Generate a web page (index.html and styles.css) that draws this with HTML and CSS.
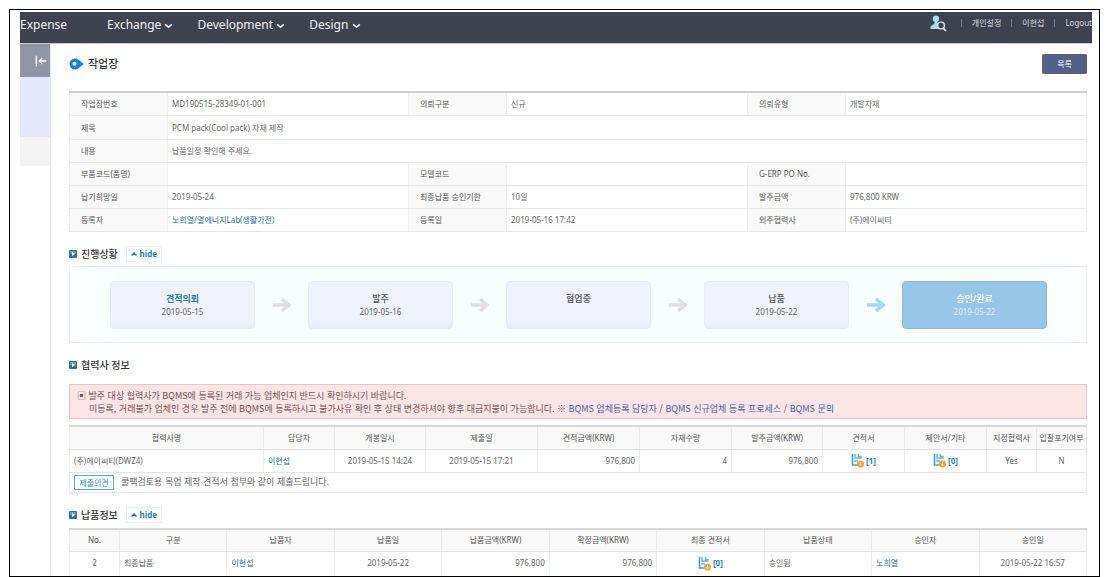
FILE: index.html
```html
<!DOCTYPE html>
<html lang="ko">
<head>
<meta charset="utf-8">
<title>작업장</title>
<link rel="stylesheet" href="styles.css">
</head>
<body>
<svg class="defs" aria-hidden="true">
  <symbol id="arrow" viewBox="0 0 20 16"><path d="M1 8h15M10 2l7 6-7 6" fill="none" stroke="currentColor" stroke-width="3.6"/></symbol>
  <symbol id="bullet" viewBox="0 0 8 8"><rect width="8" height="8" rx="1" fill="#2f6ea8"/><rect x="1" y="1" width="6" height="3" fill="#5b9bd0"/><path d="M3 2l3 2-3 2z" fill="#fff"/></symbol>
  <symbol id="doc" viewBox="0 0 14 15"><path d="M1.500 1v11.500M1 12h5" fill="none" stroke="#3f9bdc" stroke-width="1.600"/><path d="M4 1v4h6V3.500H7.500V1" fill="none" stroke="#6ab6e8" stroke-width="1.500"/><path d="M3 8h4" stroke="#6ab6e8" stroke-width="1.500"/><circle cx="9.500" cy="11" r="3.500" fill="#f2a33a"/><path d="M9.500 9v3.500M8.200 11.300l1.300 1.300 1.300-1.300" fill="none" stroke="#fbe3bd" stroke-width="0.900"/></symbol>
  <symbol id="up" viewBox="0 0 6 4"><path d="M0.500 3.500L3 1l2.500 2.500" fill="none" stroke="currentColor" stroke-width="1.500"/></symbol>
  <symbol id="down" viewBox="0 0 8 5"><path d="M1 1l3 2.500L7 1" fill="none" stroke="currentColor" stroke-width="1.500"/></symbol>
</svg>
<div class="frame">
  <header class="topbar">
    <nav class="menu">
      <a href="#">Expense</a>
      <a href="#">Exchange <svg class="down"><use href="#down"/></svg></a>
      <a href="#">Development <svg class="down"><use href="#down"/></svg></a>
      <a href="#">Design <svg class="down"><use href="#down"/></svg></a>
    </nav>
    <div class="user">
      <svg class="person" viewBox="0 0 17 17"><circle cx="6" cy="3.800" r="3.200" fill="#a5dcec"/><path d="M4.500 6h3v2.500l3 1.200V14H0.500v-2.500L4.500 8.500z" fill="#a5dcec"/><circle cx="11" cy="10.500" r="3.400" fill="#3f434f" stroke="#d5eef5" stroke-width="1.400"/><path d="M13.300 13l2.500 3" stroke="#d5eef5" stroke-width="1.600"/></svg>
      <a href="#">개인설정</a><a href="#">이현섭</a><a href="#">Logout</a>
    </div>
  </header>
  <div class="body">
    <aside class="side">
      <button class="fold" aria-label="메뉴 접기"><svg viewBox="0 0 14 12"><path d="M1.500 0v12M13 6H5.500M8.500 2.500L5 6l3.500 3.500" fill="none" stroke="#fff" stroke-width="1.500"/></svg></button>
      <div class="side-on"></div>
      <div class="side-off"></div>
    </aside>
    <main class="main">
      <div class="title">
        <svg class="mark" viewBox="0 0 15 12"><path d="M6 0.500C9 0.500 10.500 2.500 14.500 6C10.500 9.500 9 11.500 6 11.500A5.500 5.500 0 0 1 6 0.500z" fill="#1583dc"/><circle cx="5.500" cy="5.800" r="2" fill="#fff"/></svg>
        <h1>작업장</h1>
        <button class="list">목록</button>
      </div>

      <table class="info">
        <colgroup><col class="k"><col><col class="k"><col><col class="k"><col></colgroup>
        <tr><th>작업장번호</th><td>MD190515-28349-01-001</td><th>의뢰구분</th><td>신규</td><th>의뢰유형</th><td>개발자재</td></tr>
        <tr><th>제목</th><td colspan="5">PCM pack(Cool pack) 자재 제작</td></tr>
        <tr><th>내용</th><td colspan="5">납품일정 확인해 주세요.</td></tr>
        <tr><th>부품코드(품명)</th><td></td><th>모델코드</th><td></td><th>G-ERP PO No.</th><td></td></tr>
        <tr><th>납기희망일</th><td>2019-05-24</td><th>최종납품 승인기한</th><td>10일</td><th>발주금액</th><td>976,800 KRW</td></tr>
        <tr><th>등록자</th><td><a href="#">노희열/열에너지Lab(생활가전)</a></td><th>등록일</th><td>2019-05-16 17:42</td><th>외주협력사</th><td>(주)에이씨티</td></tr>
      </table>

      <div class="head">
        <svg class="bullet"><use href="#bullet"/></svg><h2>진행상황</h2>
        <button class="hide"><svg class="up"><use href="#up"/></svg>hide</button>
      </div>
      <div class="flow">
        <div class="step first"><b>견적의뢰</b><span>2019-05-15</span></div>
        <svg class="arrow"><use href="#arrow"/></svg>
        <div class="step"><b>발주</b><span>2019-05-16</span></div>
        <svg class="arrow"><use href="#arrow"/></svg>
        <div class="step"><b>협업중</b></div>
        <svg class="arrow"><use href="#arrow"/></svg>
        <div class="step"><b>납품</b><span>2019-05-22</span></div>
        <svg class="arrow now"><use href="#arrow"/></svg>
        <div class="step done"><b>승인/완료</b><span>2019-05-22</span></div>
      </div>

      <div class="head">
        <svg class="bullet"><use href="#bullet"/></svg><h2>협력사 정보</h2>
      </div>
      <div class="warn">
        <p>▣ 발주 대상 협력사가 BQMS에 등록된 거래 가능 업체인지 반드시 확인하시기 바랍니다.</p>
        <p class="more">미등록, 거래불가 업체인 경우 발주 전에 BQMS에 등록하시고 불가사유 확인 후 상태 변경하셔야 향후 대금지불이 가능합니다. ※ <a href="#">BQMS 업체등록 담당자</a> / <a href="#">BQMS 신규업체 등록 프로세스</a> / <a href="#">BQMS 문의</a></p>
      </div>
      <table class="grid vendors">
        <colgroup><col class="w194"><col class="w71"><col class="w91"><col class="w112"><col class="w102"><col class="w92"><col class="w91"><col class="w82"><col class="w82"><col class="w50"><col class="w50"></colgroup>
        <thead><tr><th>협력사명</th><th>담당자</th><th>개봉일시</th><th>제출일</th><th>견적금액(KRW)</th><th>자재수량</th><th>발주금액(KRW)</th><th>견적서</th><th>제안서/기타</th><th>지정협력사</th><th>입찰포기여부</th></tr></thead>
        <tbody>
          <tr><td>(주)에이씨티(DWZ4)</td><td><a href="#">이현섭</a></td><td class="c">2019-05-15 14:24</td><td class="c">2019-05-15 17:21</td><td class="r">976,800</td><td class="r">4</td><td class="r">976,800</td><td class="c"><a class="file" href="#"><svg><use href="#doc"/></svg>[1]</a></td><td class="c"><a class="file" href="#"><svg><use href="#doc"/></svg>[0]</a></td><td class="c yes">Yes</td><td class="c">N</td></tr>
          <tr class="note"><td colspan="11"><div class="opinion"><span class="tag">제출의견</span>쿨팩검토용 목업 제작 견적서 첨부와 같이 제출드립니다.</div></td></tr>
        </tbody>
      </table>

      <div class="head last">
        <svg class="bullet"><use href="#bullet"/></svg><h2>납품정보</h2>
        <button class="hide"><svg class="up"><use href="#up"/></svg>hide</button>
      </div>
      <table class="grid open">
        <colgroup><col class="w50"><col><col><col><col><col><col><col><col><col></colgroup>
        <thead><tr><th>No.</th><th>구분</th><th>납품자</th><th>납품일</th><th>납품금액(KRW)</th><th>확정금액(KRW)</th><th>최종 견적서</th><th>납품상태</th><th>승인자</th><th>승인일</th></tr></thead>
        <tbody><tr><td class="c">2</td><td>최종납품</td><td><a href="#">이현섭</a></td><td class="c">2019-05-22</td><td class="r">976,800</td><td class="r">976,800</td><td class="c"><a class="file" href="#"><svg><use href="#doc"/></svg>[0]</a></td><td>승인됨</td><td><a href="#">노희열</a></td><td class="c">2019-05-22 16:57</td></tr></tbody>
      </table>
    </main>
  </div>
</div>
</body>
</html>
```
FILE: styles.css
```css
* { box-sizing: border-box; }
body {
  margin: 0;
  padding: 9px 9px 0;
  background: #fff;
  color: #666;
  font: 8px/12px "Noto Sans", "Noto Sans CJK KR", sans-serif;
}
a { color: #1f6cab; text-decoration: none; }
button { font: inherit; border: 0; padding: 0; cursor: pointer; }
h1, h2, p { margin: 0; }
svg { flex: none; }
.defs { display: none; }

.frame {
  min-height: calc(100vh - 9px);
  padding: 2px 7px 1px 10px;
  border: 1px solid #000;
}

.topbar {
  display: flex;
  justify-content: space-between;
  height: 32px;
  overflow: hidden;
  background: #3f434f;
  border-bottom: 1px solid #c9c5d2;
}
.menu { display: flex; height: 25px; align-items: center; gap: 24px; }
.menu a { color: #f0f1f4; font-size: 12px; line-height: 16px; }
.menu a:first-child { margin-right: 16px; }
.down { width: 9px; height: 6px; }
.user { display: flex; height: 22px; align-items: center; }
.user a {
  color: #d6d8de;
  padding-left: 10px;
  margin-left: 10px;
  line-height: 8px;
  border-left: 1px solid #777b87;
}
.person { width: 17px; height: 17px; margin-right: 4px; }

.body { display: flex; }
.side { width: 30px; flex: none; }
.fold {
  display: flex;
  width: 100%;
  height: 33px;
  align-items: center;
  justify-content: flex-end;
  padding-right: 3px;
  background: #9096a3;
}
.fold svg { width: 12px; height: 12px; }
.side-on { height: 60px; background: #e5e7fb; }
.side-off { height: 29px; background: #f3f3f3; }
.main { flex: 1; min-width: 0; padding: 10px 5px 0 18px; border-left: 1px solid #e6e6e6; }

.title { display: flex; height: 20px; align-items: center; margin-bottom: 17px; }
.mark { width: 15px; height: 12px; }
h1 { margin-left: 4px; color: #333; font-size: 11px; line-height: 16px; font-weight: 500; }
.list {
  width: 45px;
  height: 20px;
  margin-left: auto;
  color: #fff;
  background: #566086;
  border-radius: 2px;
}

table { width: 100%; table-layout: fixed; border-collapse: collapse; }
th, td { padding: 0 4px; text-align: left; font-weight: 400; white-space: nowrap; }
.info { height: 141px; border-top: 2px solid #cfcfcf; border-right: 1px solid #f0f0f0; }
.info .k { width: 98px; }
.info th { padding-left: 11px; background: #f9f9f9; color: #555; border-left: 1px solid #f0f0f0; }
.info th, .info td { border-bottom: 1px solid #e8e8e8; border-right: 1px solid #f0f0f0; }

.head { display: flex; height: 16px; align-items: center; margin: 14px 0 4px; }
.head.last { margin-bottom: 5px; }
.bullet { width: 8px; height: 8px; }
h2 { margin-left: 4px; color: #333; font-size: 10px; line-height: 14px; font-weight: 500; }
.hide {
  display: flex;
  width: 36px;
  height: 16px;
  margin-left: 8px;
  align-items: center;
  justify-content: center;
  gap: 3px;
  color: #1d7fb8;
  background: #fff;
  border: 1px solid #e9f0f3;
  font-weight: 700;
}
.up { width: 6px; height: 4px; }

.flow {
  display: flex;
  height: 77px;
  align-items: center;
  justify-content: space-between;
  padding: 0 39px 0 40px;
  border: 1px solid #ececec;
  background: linear-gradient(90deg, #fff, #f8feff 5%, #f8feff 95%, #fff);
}
.step {
  display: flex;
  width: 145px;
  height: 48px;
  flex-direction: column;
  padding-top: 10px;
  text-align: center;
  line-height: 13px;
  background: linear-gradient(#f0f3fd 80%, #e8ecf6);
  border: 1px solid #eaecf4;
  border-radius: 4px;
}
.step b { font-weight: 500; font-size: 9px; color: #555; }
.step.first b { color: #1f7fb5; font-weight: 700; }
.step.done { background: #98c6e9; border-color: #8dbbe0; color: #dcebf7; }
.step.done b { color: #fff; }
.arrow { width: 20px; height: 16px; color: #e0e0e0; }
.arrow.now { color: #a9d5f8; }

.warn {
  margin: 11px 0 6px;
  padding: 4px 7px 3px;
  color: #765257;
  background: #fde4e5;
  border: 1px solid #efc4c8;
  line-height: 13px;
}
.warn, .opinion { font-family: "Noto Sans CJK KR", sans-serif; font-size: 9px; }
.warn a { color: #3a63c0; }
.more { padding-left: 12px; }

.grid { border-top: 2px solid #d9d9d9; border-right: 1px solid #f0f0f0; border-left: 1px solid #f0f0f0; }
.grid th { height: 23px; padding: 0; text-align: center; color: #555; background: #f9f9f9; }
.grid td { height: 23px; }
.grid th, .grid td { border-right: 1px solid #ececec; border-bottom: 1px solid #e4e4e4; }
.grid.open td { border-bottom: 0; }
.grid .c { text-align: center; }
.grid .r { text-align: right; }
.grid .yes { color: #456; }
.grid .note td { height: 20px; }
.opinion { display: flex; align-items: center; gap: 7px; }
.tag { width: 40px; color: #2d9ba5; font-size: 8px; text-align: center; line-height: 13px; border: 1px solid #55aeb5; border-radius: 1px; }
.file { display: inline-flex; align-items: center; gap: 1px; font-weight: 700; vertical-align: middle; color: #2a7fbd; }
.file svg { width: 14px; height: 15px; }
.w194 { width: 194px; } .w71 { width: 71px; } .w91 { width: 91px; }
.w112 { width: 112px; } .w102 { width: 102px; } .w92 { width: 92px; }
.w82 { width: 82px; } .w50 { width: 50px; }
```
